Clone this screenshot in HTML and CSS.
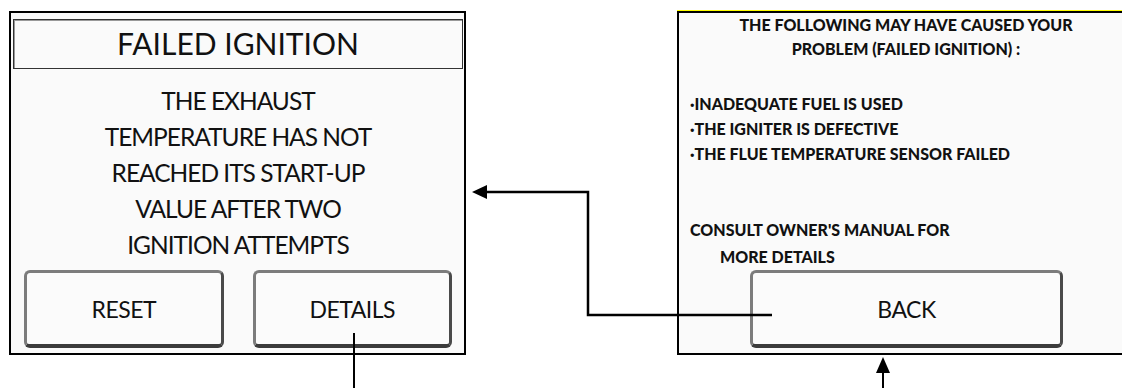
FILE: index.html
```html
<!DOCTYPE html>
<html lang="en">
<head>
    <meta charset="UTF-8">
    <title>Failed Ignition Screens</title>
    <link rel="stylesheet" href="styles.css">
</head>
<body>
    <div class="stage">
        <div class="screen screen-alarm">
            <div class="title">FAILED IGNITION</div>
            <div class="message">
                THE EXHAUST<br>
                TEMPERATURE HAS NOT<br>
                REACHED ITS START-UP<br>
                VALUE AFTER TWO<br>
                IGNITION ATTEMPTS
            </div>
            <div class="buttons">
                <div class="btn">RESET</div>
                <div class="btn">DETAILS</div>
            </div>
        </div>

        <div class="screen screen-details">
            <div class="cause-head">
                THE FOLLOWING MAY HAVE CAUSED YOUR<br>
                PROBLEM (FAILED IGNITION) :
            </div>
            <ul class="causes">
                <li>&middot;INADEQUATE FUEL IS USED</li>
                <li>&middot;THE IGNITER IS DEFECTIVE</li>
                <li>&middot;THE FLUE TEMPERATURE SENSOR FAILED</li>
            </ul>
            <div class="consult">
                CONSULT OWNER'S MANUAL FOR<br>
                <span class="indent">MORE DETAILS</span>
            </div>
            <div class="btn btn-back">BACK</div>
        </div>

        <!-- connectors between the screens -->
        <svg class="links" width="1122" height="388" viewBox="0 0 1122 388">
            <polyline points="772,315 588,315 588,192 486,192" fill="none" stroke="#000" stroke-width="2.5"/>
            <polygon points="472,192 487,185 487,199" fill="#000"/>
            <line x1="354" y1="333" x2="354" y2="388" stroke="#000" stroke-width="2"/>
            <line x1="883" y1="371" x2="883" y2="388" stroke="#000" stroke-width="2"/>
            <polygon points="883,357 876,373 890,373" fill="#000"/>
        </svg>
    </div>
</body>
</html>
```

FILE: styles.css
```css
body {
    margin: 0;
    padding: 0;
    background-color: #fff;
    font-family: Lato, "Open Sans", sans-serif;
    color: #111;
    overflow: hidden;
}

.stage {
    position: relative;
    width: 1122px;
    height: 388px;
    display: flex;
    align-items: flex-start;
    padding: 11px 0 0 9px;
    box-sizing: border-box;
}

.screen {
    box-sizing: border-box;
    border: 2px solid #000;
    background-color: #fafafa;
    height: 344px;
    flex-shrink: 0;
}

.screen-alarm {
    width: 457px;
    padding: 6px 1px 0 2px;
    display: flex;
    flex-direction: column;
}

.title {
    height: 50px;
    border: 1px solid #333;
    box-shadow: inset 1px 1px 0 #999;
    box-sizing: border-box;
    text-align: center;
    font-size: 30px;
    line-height: 47px;
}

.message {
    text-align: center;
    font-size: 24.5px;
    letter-spacing: -1px;
    line-height: 36px;
    margin-top: 14px;
}

.buttons {
    display: flex;
    gap: 29px;
    margin-top: auto;
    padding: 0 11px 5px 11px;
}

.btn {
    box-sizing: border-box;
    height: 78px;
    flex: 1;
    border: 3px solid #7c7c7c;
    border-right-color: #4a4a4a;
    border-bottom: 4px solid #3c3c3c;
    border-radius: 6px;
    background-color: #fbfbfb;
    display: flex;
    align-items: center;
    justify-content: center;
    font-size: 23px;
    letter-spacing: -0.5px;
}

.screen-details {
    width: 458px;
    margin-left: 211px;
    padding: 0 0 0 11px;
    box-shadow: 0 -1px 0 #ffff00;
    display: flex;
    flex-direction: column;
    font-weight: 900;
    font-size: 16px;
}

.cause-head {
    text-align: center;
    line-height: 24px;
    margin-left: -11px;
}

.causes {
    list-style: none;
    margin: 30px 0 0 0;
    padding: 0;
    line-height: 25px;
}

.consult {
    margin-top: 50px;
    line-height: 27px;
}

.indent {
    padding-left: 30px;
}

.btn-back {
    flex: none;
    width: 313px;
    margin: auto 0 5px 60px;
    font-weight: normal;
    font-size: 23px;
}

.links {
    position: absolute;
    left: 0;
    top: 0;
}
```
